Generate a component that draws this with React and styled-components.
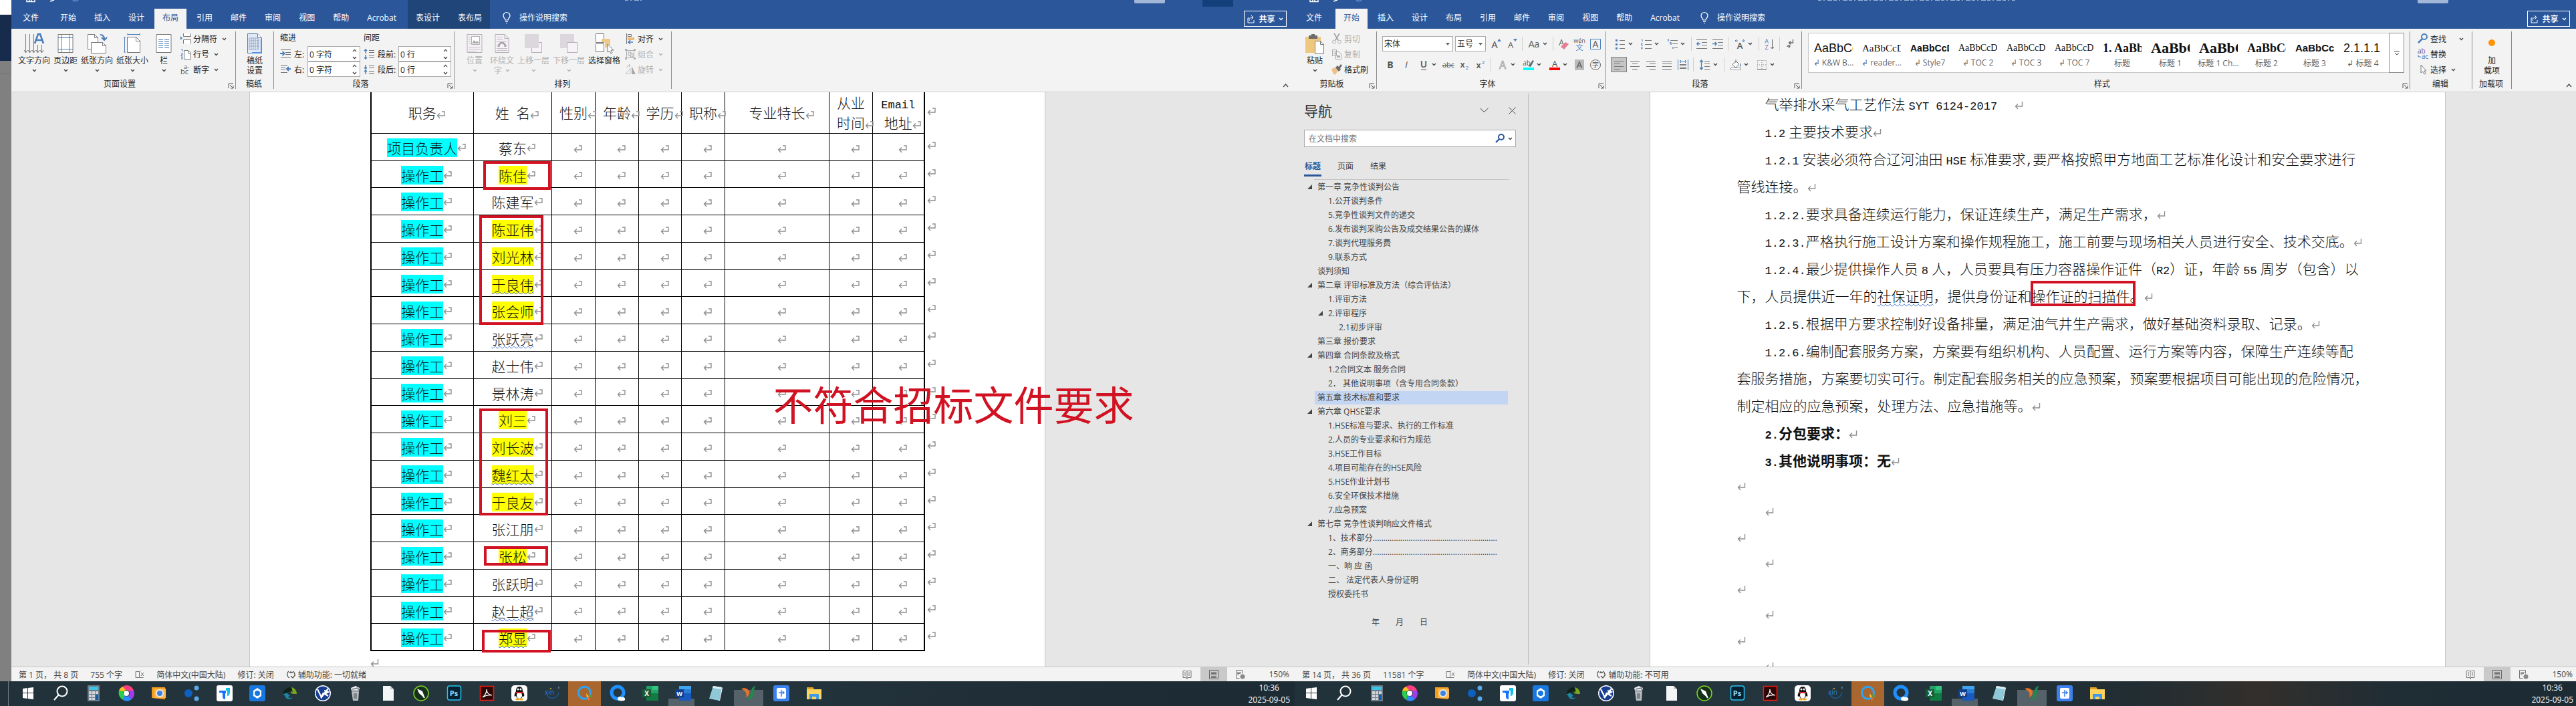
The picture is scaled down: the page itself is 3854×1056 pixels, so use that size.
import React from 'react'
import styled, { createGlobalStyle, css } from 'styled-components'

const UI = `"Open Sans", "Noto Sans", "Noto Sans CJK SC", sans-serif`
const SONG = `"Noto Sans CJK SC", sans-serif`
const MONO = `"Liberation Mono", "Noto Sans CJK SC", monospace`

/* ---------- data ---------- */

const tabs = ['开始', '插入', '设计', '布局', '引用', '邮件', '审阅', '视图', '帮助', 'Acrobat']

const people = [
  { name: '蔡东', job: '项目负责人' },
  { name: '陈佳', hot: true },
  { name: '陈建军' },
  { name: '陈亚伟', hot: true },
  { name: '刘光林', hot: true },
  { name: '于良伟', hot: true, wavy: true },
  { name: '张会师', hot: true },
  { name: '张跃亮', wavy: true },
  { name: '赵士伟' },
  { name: '景林涛' },
  { name: '刘三', hot: true },
  { name: '刘长波', hot: true },
  { name: '魏红太', hot: true, wavy: true },
  { name: '于良友', hot: true },
  { name: '张江朋' },
  { name: '张松', hot: true },
  { name: '张跃明' },
  { name: '赵士超', wavy: true },
  { name: '郑显', hot: true, wavy: true },
]

const dots = '.'.repeat(59)

const outline = [
  [1, '第一章 竞争性谈判公告', true],
  [2, '1.公开谈判条件'],
  [2, '5.竞争性谈判文件的递交'],
  [2, '6.发布谈判采购公告及成交结果公告的媒体'],
  [2, '7.谈判代理服务费'],
  [2, '9.联系方式'],
  [1, '谈判须知'],
  [1, '第二章 评审标准及方法（综合评估法）', true],
  [2, '1.评审方法'],
  [2, '2.评审程序', true],
  [3, '2.1初步评审'],
  [1, '第三章 报价要求'],
  [1, '第四章 合同条款及格式', true],
  [2, '1.2合同文本 服务合同'],
  [2, '2． 其他说明事项（含专用合同条款）'],
  [1, '第五章 技术标准和要求', false, true],
  [1, '第六章 QHSE要求', true],
  [2, '1.HSE标准与要求、执行的工作标准'],
  [2, '2.人员的专业要求和行为规范'],
  [2, '3.HSE工作目标'],
  [2, '4.项目可能存在的HSE风险'],
  [2, '5.HSE作业计划书'],
  [2, '6.安全环保技术措施'],
  [2, '7.应急预案'],
  [1, '第七章 竞争性谈判响应文件格式', true],
  [2, '1、技术部分' + dots],
  [2, '2、商务部分' + dots],
  [2, '一、响 应 函'],
  [2, '二、 法定代表人身份证明'],
  [2, '授权委托书'],
]

const gallery = [
  { text: 'AaBbCc', label: '↲ K&W B...', font: 'Liberation Sans', size: 18 },
  { text: 'AaBbCcDc', label: '↲ reader...', font: 'Liberation Serif', size: 15 },
  { text: 'AaBbCcDc', label: '↲ Style7', font: 'Liberation Sans', size: 14, bold: true },
  { text: 'AaBbCcDdE', label: '↲ TOC 2', font: 'Liberation Serif', size: 14 },
  { text: 'AaBbCcDdE', label: '↲ TOC 3', font: 'Liberation Serif', size: 14 },
  { text: 'AaBbCcDdE', label: '↲ TOC 7', font: 'Liberation Serif', size: 14 },
  { text: '1. AaBb', label: '标题', font: 'Liberation Serif', size: 18, bold: true },
  { text: 'AaBbC', label: '标题 1', font: 'Liberation Serif', size: 22, bold: true },
  { text: 'AaBbC', label: '标题 1 Ch...', font: 'Liberation Serif', size: 22, bold: true },
  { text: 'AaBbCc', label: '标题 2', font: 'Liberation Serif', size: 18, bold: true },
  { text: 'AaBbCcD', label: '标题 3', font: 'Liberation Sans', size: 15, bold: true },
  { text: '2.1.1.1', label: '↲ 标题 4', font: 'Liberation Sans', size: 18 },
]

/* ---------- icons ---------- */

const G = '#7a7a7a'
const B = '#4a7ebb'

const Svg = ({ w = 16, h = 16, children }) => (
  <Glyph width={w} height={h} viewBox={`0 0 ${w} ${h}`} fill="none" aria-hidden="true">{children}</Glyph>
)

const Glyph = styled.svg`
  display: block;
  flex: none;
  overflow: visible;
`

const Chev = ({ color = '#444' }) => (
  <Svg w={7} h={5}><path d="M1 1l2.500 2.500L6 1" stroke={color} strokeWidth="1.400" /></Svg>
)

const Launcher = () => (
  <Svg w={9} h={9}><path d="M1 8V1h7M3 3l5 5M8 4v4H4" stroke="#555" /></Svg>
)

const big = {
  direction: <Svg w={30} h={30}><path d="M2.500 1v27M8.500 1v27M14.500 1v27M20.500 17v11M26.500 17v11M0 25l2.500 4L5 25M6 25l2.500 4 2.500-4M12 25l2.500 4 2.500-4M18 25l2.500 4 2.500-4M24 25l2.500 4 2.500-4" stroke={G} /><path d="M16 15l5-14h3l5 14M18 10h9" stroke={B} strokeWidth="2.600" /></Svg>,
  margins: <Svg w={24} h={30}><path d="M1 1.500h22v27H1z" fill="#fff" stroke={G} /><path d="M5.500 2v26M18.500 2v26M1 6.500h22M1 23.500h22" stroke={B} /></Svg>,
  orient: <Svg w={30} h={30}><path d="M1.500 1.500h10l5 5v17h-15z" fill="#fff" stroke={G} /><path d="M6.500 13.500h17l5 5v11h-22z" fill="#fff" stroke={G} /><path d="M11.500 1.500v5h5M23.500 13.500v5h5" stroke={G} /><path d="M20 2c5 0 6 3 6 7m-4-3l4 4 4-4" stroke={B} strokeWidth="2.200" /></Svg>,
  size: <Svg w={26} h={30}><path d="M5.500 5.500h13l6 6v17h-19z" fill="#fff" stroke={G} /><path d="M18.500 5.500v6h6" stroke={G} /><path d="M6 1.500h18M6 0v3M24 0v3M1.500 6v22M0 6h3M0 28h3" stroke={B} /></Svg>,
  columns: <Svg w={24} h={30}><path d="M1 1.500h22v27H1z" fill="#fff" stroke={G} /><path d="M4 9.500h7M4 12.500h7M4 15.500h7M4 18.500h7M4 21.500h7M13 9.500h7M13 12.500h7M13 15.500h7M13 18.500h7M13 21.500h7" stroke={B} /></Svg>,
  manuscript: <Svg w={24} h={30}><path d="M1.500.5h15l6 6v23h-21z" fill="#dfe9f8" stroke="#5f7ba5" /><path d="M16.500.5v6h6" fill="#fff" stroke="#5f7ba5" /><path d="M4 7h13v17H4zM4 11h15M4 15h15M4 19h15M7 7v17M10 7v17M13 7v17M17 9v15" stroke="#9aa9be" /><path d="M22 8v21H8" stroke="#5b8fe0" strokeWidth="2" /></Svg>,
  position: <Svg w={24} h={30}><path d="M1 1.500h22v27H1z" fill="#f4f0f5" stroke="#b5b0b6" /><path d="M7.500 4.500h12v12h-12z" fill="#fff" stroke="#b5b0b6" /><path d="M8 15l3-5 3 3 2-2 3 4z" fill="#aaa" /><path d="M3 6.500h3M3 9.500h3M3 12.500h3M3 15.500h3M3 20.500h18M3 23.500h18M3 26.500h12" stroke="#c6c1c7" /></Svg>,
  wrap: <Svg w={22} h={30}><path d="M1 1.500h14l6 6v21H1z" fill="#f4f0f5" stroke="#b5b0b6" /><path d="M15 1.500v6h6" stroke="#b5b0b6" /><path d="M3 5.500h9M3 9.500h9M3 12.500h15M3 17.500h2M17 17.500h2M3 22.500h16M3 25.500h16" stroke="#c6c1c7" /><path d="M6 20c0-8 10-8 10 0" stroke="#a8a8a8" strokeWidth="3" /></Svg>,
  forward: <Svg w={26} h={30}><path d="M10.500 13.500h15v15h-15z" fill="#f6f2f7" stroke="#b5b0b6" /><path d="M0 1h21v21H0z" fill="#dcd7dc" /></Svg>,
  backward: <Svg w={26} h={30}><path d="M0 1h21v21H0z" fill="#dcd7dc" /><path d="M10.500 13.500h15v15h-15z" fill="#f6f2f7" stroke="#b5b0b6" /></Svg>,
  pane: <Svg w={28} h={30}><path d="M1.500.5h12v13h-12zM1.500 15.500h12v12h-12z" fill="#fff" stroke={G} /><path d="M10 8h13v9h-4v4h-4v-8h-5z" fill="#f0c987" /><path d="M19 16v12l3-2 2 4 2-1-2-4h4z" fill="#fff" stroke="#777" /></Svg>,
  paste: <Svg w={28} h={31}><path d="M0 5h23v24H0z" fill="#edc87e" /><path d="M5 3h4V1h5v2h4v5H5z" fill="#6c6c6c" /><path d="M14.500 11.500h8l5 5v14h-13z" fill="#fff" stroke={G} /><path d="M22.500 11.500v5h5" stroke={G} /></Svg>,
  addin: <Svg w={20} h={30}><circle cx="10" cy="14" r="5" fill="#ff9409" /></Svg>,
}

const small = {
  breaks: <Svg><path d="M4.500 0v4.500h11V0M4.500 15.500V9.500h11v6" stroke={G} fill="#fff" /><path d="M0 4l3 3-3 3z" fill={B} /></Svg>,
  lines: <Svg><path d="M5.500 2.500h6l4 4v9h-10z" fill="#fff" stroke={G} /><path d="M11.500 2.500v4h4" stroke={G} /><path d="M1 1h2v3M1 7h2v2H1v2h2M1 13h2v2H1" stroke={B} /></Svg>,
  hyphen: <Svg><text x="5" y="7" fontSize="9" fontFamily="Open Sans" fill="#555">a-</text><text x="0" y="15" fontSize="11" fontFamily="Open Sans" fill="#555">bc</text></Svg>,
  align: <Svg><path d="M2.500 0v16" stroke={G} /><path d="M4.500 1.500h5v3h-5z" stroke={G} /><path d="M4 6h10v4H4z" fill="#edb978" /><path d="M12 13H5m3-3l-3 3 3 3" stroke={B} strokeWidth="1.500" /></Svg>,
  group: <Svg><path d="M2.500 2.500h11v11h-11zM5 5h4v5H5zM8 7h4v5H8z" stroke="#b0b0b0" /><path d="M0 0h3v3H0zM13 0h3v3h-3zM0 13h3v3H0zM13 13h3v3h-3z" fill="#b0b0b0" /></Svg>,
  rotate: <Svg><path d="M1 14h7V6z" stroke="#c4c4c4" /><path d="M10 3v12h6z" fill="#a8a8a8" /><path d="M3 5c0-3 3-3 5-3M6 0l2 2-2 2" stroke="#b0b0b0" /></Svg>,
  cut: <Svg><path d="M4 0l6 10M12 0L6 10" stroke="#a0a0a0" strokeWidth="1.600" /><circle cx="4" cy="12.500" r="2.500" stroke="#b0b0b0" /><circle cx="12" cy="12.500" r="2.500" stroke="#b0b0b0" /></Svg>,
  copy: <Svg><path d="M1.500 1.500h6v9h-6zM6.500 4.500h5l3 3v8h-8z" fill="#f3f3f3" stroke="#ababab" /><path d="M8 9.500h5M8 11.500h5M8 13.500h5M3 4.500h3M3 6.500h3" stroke="#ababab" /></Svg>,
  painter: <Svg><path d="M0 7l6-2 4 5-5 6c-2-1-4-5-5-9z" fill="#edc087" /><path d="M6 5l3-3 2 2 3-4 2 2-3 4 1 2-3 3z" fill="#6a6a6a" /></Svg>,
  find: <Svg><circle cx="10" cy="5" r="4" stroke={B} strokeWidth="2" /><path d="M7 8l-6 6" stroke={B} strokeWidth="2.500" /></Svg>,
  replace: <Svg><text x="0" y="7" fontSize="10" fontFamily="Open Sans" fill="#555">a<tspan fill="#8a4fae">b</tspan></text><text x="6" y="15" fontSize="10" fontFamily="Open Sans" fill={B}>ac</text><path d="M1 9v3h4" stroke={B} /></Svg>,
  select: <Svg><path d="M5 1v12l3-2 2 4 2-1-2-4h3z" fill="#fff" stroke="#777" /></Svg>,
  indentL: <Svg w={17}><path d="M1 1.500h15M8 5.500h8M8 8.500h8M1 12.500h15" stroke="#777" /><path d="M0 7h6M3.500 4l3 3-3 3" stroke={B} strokeWidth="2" /></Svg>,
  indentR: <Svg w={17}><path d="M1 1.500h10M1 5.500h7M1 8.500h7M1 12.500h10" stroke="#777" /><path d="M16 7h-5M13 4l-3 3 3 3" stroke={B} strokeWidth="2" /></Svg>,
  before: <Svg w={17}><path d="M3 1v6M1 3l2-2 2 2M3 9v6M1 13l2 2 2-2" stroke={B} strokeWidth="1.500" /><path d="M8 2.500h8M8 5.500h8M8 10.500h8M8 13.500h8" stroke="#777" /></Svg>,
  after: <Svg w={17}><path d="M3 1v6M1 5l2 2 2-2M3 9v6M1 11l2-2 2 2" stroke={B} strokeWidth="1.500" /><path d="M8 2.500h8M8 5.500h8M8 10.500h8M8 13.500h8" stroke="#777" /></Svg>,
}

const Letter = ({ children, x = 8, y = 14, size = 15, color = '#555', weight, style, deco }) => (
  <text x={x} y={y} fontSize={size} fill={color} textAnchor="middle" fontWeight={weight} fontStyle={style} textDecoration={deco} fontFamily="Open Sans, Noto Sans CJK SC">{children}</text>
)

const tool = {
  grow: <Svg w={18}><Letter x={7}>A</Letter><path d="M11 4l3-4 3 4z" fill={B} /></Svg>,
  shrink: <Svg w={18}><Letter x={7} size={13}>A</Letter><path d="M11 0l3 4 3-4z" fill={B} /></Svg>,
  caseAa: <Svg w={18}><Letter x={9} y={13} size={14}>Aa</Letter></Svg>,
  clear: <Svg><Letter x={5} y={10} size={12}>A</Letter><path d="M4 12l7-7 5 3-7 8z" fill="#e57f93" /></Svg>,
  pinyin: <Svg w={18} h={20}><Letter x={9} y={8} size={9}>wén</Letter><Letter x={9} y={19} size={11} color={B}>文</Letter></Svg>,
  boxA: <Svg><path d="M.5.5h15v15H.5z" stroke={B} /><Letter y={13} size={14}>A</Letter></Svg>,
  bold: <Svg><Letter y={13} size={14} weight="700">B</Letter></Svg>,
  italic: <Svg><Letter y={13} size={14} style="italic">I</Letter></Svg>,
  underline: <Svg><Letter y={12} size={14} weight="600">U</Letter><path d="M4 15.500h8" stroke="#555" /></Svg>,
  strike: <Svg w={18}><Letter x={9} y={12} size={11}>abc</Letter><path d="M0 8.500h18" stroke="#555" /></Svg>,
  sub: <Svg><Letter x={5} y={12} size={13} weight="600">x</Letter><Letter x={12} y={15} size={8} color={B}>2</Letter></Svg>,
  sup: <Svg><Letter x={5} y={13} size={13} weight="600">x</Letter><Letter x={12} y={7} size={8} color={B}>2</Letter></Svg>,
  effect: <Svg><text x="8" y="14" fontSize="16" textAnchor="middle" fontFamily="Open Sans" fill="#fff" stroke="#b0b0b0">A</text></Svg>,
  marker: <Svg><Letter x={5} y={9} size={10}>ab</Letter><path d="M8 10l6-9 2 1-5 9z" fill="#666" /><path d="M0 12h16v4H0z" fill="#00ffff" /></Svg>,
  color: <Svg><Letter y={11} size={13}>A</Letter><path d="M0 12h16v4H0z" fill="#f00" /></Svg>,
  shade: <Svg><path d="M1 0h14v16H1z" fill="#bbb" /><Letter y={13} size={14}>A</Letter></Svg>,
  circle: <Svg><circle cx="8" cy="8" r="7.500" stroke="#666" /><Letter y={12} size={10}>字</Letter></Svg>,
  bullets: <Svg><path d="M1 1h3v3H1zM1 7h3v3H1zM1 13h3v3H1z" fill={B} /><path d="M7 2.500h8M7 8.500h8M7 14.500h8" stroke={G} /></Svg>,
  numbers: <Svg><path d="M1 1h1v3M0 7h2v1H1v2h2M0 13h2v2H0" stroke={B} /><path d="M6 2.500h10M6 8.500h10M6 14.500h10" stroke={G} /></Svg>,
  multi: <Svg><path d="M1 1h1v3M4 6h2v3M9 12v3" stroke={B} strokeWidth="1.300" /><path d="M5 2.500h11M8 7.500h8M11 13.500h5" stroke={G} /></Svg>,
  outdent: <Svg><path d="M0 1.500h16M8 5.500h8M8 9.500h8M0 14.500h16" stroke={G} /><path d="M6 7.500H1M3 5L1 7.500 3 10" stroke={B} strokeWidth="1.600" /></Svg>,
  indent: <Svg><path d="M0 1.500h16M8 5.500h8M8 9.500h8M0 14.500h16" stroke={G} /><path d="M0 7.500h5M4 5l2 2.500L4 10" stroke={B} strokeWidth="1.600" /></Svg>,
  asian: <Svg><Letter y={15} size={13} weight="600">A</Letter><path d="M5 3H1m2-2L1 3l2 2M11 3h4m-2-2l2 2-2 2" stroke={B} /></Svg>,
  sort: <Svg><Letter x={4} y={7} size={9} color={B}>A</Letter><Letter x={4} y={16} size={9} color="#8a4fae">Z</Letter><path d="M12.500 1v14M10 12l2.500 3 2.500-3" stroke="#666" /></Svg>,
  marks: <Svg><path d="M12.500 1v5H7M9 3.500L6.500 6 9 8.500M3 11h5M6 9l2 2-2 3" stroke="#666" strokeWidth="1.300" /></Svg>,
  left: <Svg w={14} h={14}><path d="M0 1.500h14M0 5.500h9M0 9.500h14M0 13.500h9" stroke={G} /></Svg>,
  center: <Svg w={14} h={14}><path d="M0 1.500h14M3 5.500h8M0 9.500h14M3 13.500h8" stroke={G} /></Svg>,
  right: <Svg w={14} h={14}><path d="M0 1.500h14M5 5.500h9M0 9.500h14M5 13.500h9" stroke={G} /></Svg>,
  justify: <Svg w={14} h={14}><path d="M0 1.500h14M0 5.500h14M0 9.500h14M0 13.500h14" stroke={G} /></Svg>,
  distribute: <Svg><path d="M.5 0v16M15.500 0v16M3 3h10M5 1L3 3l2 2M11 1l2 2-2 2" stroke={B} /><path d="M3 7.500h10M3 9.500h10M3 11.500h10M3 13.500h10" stroke={G} /></Svg>,
  spacing: <Svg><path d="M2.500 1v14M0 4l2.500-3L5 4M0 12l2.500 3L5 12" stroke={B} strokeWidth="1.300" /><path d="M7 2.500h8M7 6.500h8M7 10.500h8M7 14.500h8" stroke={G} /></Svg>,
  fill: <Svg><path d="M3 8l5-6 5 5-5 5z" fill="#fff" stroke="#777" /><path d="M8 0v5" stroke="#777" /><path d="M14 5c2 3 2 5 0 6z" fill={B} /><path d="M.5 12.500h15v3H.5z" fill="#fff" stroke="#999" /></Svg>,
  border: <Svg><path d="M1.500 1.500h13v13h-13zM8 1v14M1 8h14" stroke="#888" strokeDasharray="1 2" /><path d="M1 14.500h14" stroke="#666" /></Svg>,
}

const Sq = ({ fill, r = 3, children }) => (
  <Svg w={24} h={24}><rect width="24" height="24" rx={r} fill={fill} />{children}</Svg>
)
const AppText = ({ children, x = 12, y = 17, size = 12, color = '#fff' }) => (
  <text x={x} y={y} fontSize={size} fill={color} fontWeight="700" textAnchor="middle" fontFamily="Open Sans">{children}</text>
)

const apps = [
  ['开始', <Svg w={24} h={24}><path d="M4 5l7-1v7H4zM12 4l8-1v8h-8zM4 12h7v8l-7-1zM12 12h8v9l-8-1z" fill="#fff" /></Svg>],
  ['搜索', <Svg w={24} h={24}><circle cx="14" cy="9" r="7.500" stroke="#fff" strokeWidth="2" /><path d="M9 14l-7 8" stroke="#fff" strokeWidth="2" /></Svg>],
  ['计算器', <Svg w={24} h={24}><rect x="3" width="18" height="24" rx="1" fill="#6f7a85" /><path d="M5 2h14v5H5z" fill="#3cc5e8" /><path d="M5 9h4v4H5zM10 9h4v4h-4zM15 9h4v4h-4zM5 14h4v4H5zM10 14h4v4h-4zM5 19h4v3H5zM10 19h4v3h-4z" fill="#cfd6dc" /><path d="M15 14h4v8h-4z" fill="#0f5fae" /></Svg>],
  ['浏览器', <Svg w={24} h={24}><path d="M12 0a12 12 0 0 1 11 8l-8 0a5 5 0 0 0-7 1L5 3a12 12 0 0 1 7-3z" fill="#ff3e7f" /><path d="M23 8a12 12 0 0 1-3 13l-5-5a5 5 0 0 0 0-8z" fill="#a03cf0" /><path d="M20 21a12 12 0 0 1-13 1l2-7a5 5 0 0 0 6 1z" fill="#2f8bff" /><path d="M7 22A12 12 0 0 1 1 8l7 1a5 5 0 0 0 1 6z" fill="#2ccf4c" /><path d="M1 8a12 12 0 0 1 5-6l5 5-3 2z" fill="#ffc21a" /><circle cx="12" cy="12" r="4" fill="#fff" /></Svg>],
  ['图片查看', <Svg w={24} h={24}><path d="M1 3h20v18L1 19z" fill="#f79b1b" /><path d="M5 5h17v14H5z" fill="#ffb84a" /><circle cx="13" cy="12" r="5" fill="#3f82d8" stroke="#dfe9f5" strokeWidth="2" /></Svg>],
  ['共享', <Svg w={24} h={24}><circle cx="7" cy="12" r="6" fill="#0d5fc0" /><circle cx="19" cy="4" r="3.500" fill="#5aa8e8" /><circle cx="19" cy="20" r="3.500" fill="#5aa8e8" /></Svg>],
  ['待办', <Sq fill="#fff"><path d="M4 8h10v4H8v-1H4zM9 12h4v9c-3 0-4-2-4-4z" fill="#1573ff" /><path d="M14 4h6v6c0 4-2 6-4 6V8h-2z" fill="#12bfe8" /></Sq>],
  ['云盘', <Sq fill="#1878e0"><path d="M12 4l6 4v8l-6 4-6-4V8z" fill="#fff" /><circle cx="12" cy="12" r="4" fill="#1878e0" /></Sq>],
  ['同步', <Svg w={24} h={24}><path d="M2 13a10 9 0 0 1 14-9l-2 5a5 5 0 0 0-6 4z" fill="#102218" /><path d="M14 3c5 1 8 5 8 10h-4l-5-1 1-3 2 1z" fill="#7aa51e" /><path d="M1 14l6-3 5 5-3 1c1 2 4 3 7 1-3 4-11 4-12-3z" fill="#1b87a5" /></Svg>],
  ['CAD', <Svg w={24} h={24}><circle cx="12" cy="12" r="12" fill="#fff" /><circle cx="12" cy="12" r="10.500" fill="#173e91" /><path d="M4 6l6 12 3-7M20 5L9 19M14 8l6 2-5 3 5 3" stroke="#fff" strokeWidth="2.200" /></Svg>],
  ['回收站', <Svg w={24} h={24}><path d="M6 9h11l-1 14H8z" fill="#b9bec2" /><path d="M5 4l7-3 6 3-1 4H6z" fill="#eef1f3" /><path d="M7 6l8-2 2 3" stroke="#6d7478" strokeWidth="1.500" /><path d="M9 12h5v8H9z" fill="#7d858a" /></Svg>],
  ['文档', <Svg w={24} h={24}><path d="M4 1h11l5 5v17H4z" fill="#f3f5f6" /><path d="M15 1v5h5" fill="#c3cacf" /></Svg>],
  ['CorelDRAW', <Svg w={24} h={24}><circle cx="12" cy="12" r="11" fill="#16301a" stroke="#7ed321" strokeWidth="1.500" /><path d="M6 5l8 4 3 8-1 1-7-6z" fill="#fff" /><path d="M15 16l2 3" stroke="#fff" strokeWidth="2" /></Svg>],
  ['Photoshop', <Svg w={24} h={24}><rect x="2.500" y="1" width="20" height="21" rx="3" fill="#06202f" stroke="#27c3f3" strokeWidth="1.500" /><AppText x={12} y={16} size={11} color="#8fdcff">Ps</AppText></Svg>],
  ['Acrobat', <Svg w={24} h={24}><rect x="2.500" y="1.500" width="20" height="21" fill="#2b0707" stroke="#f01c10" strokeWidth="1.500" /><path d="M6 18c4-3 6-8 6-12 0 5 3 8 8 9-5-1-9 0-14 3z" stroke="#fff" strokeWidth="1.200" /></Svg>],
  ['QQ', <Sq fill="#fff" r={5}><path d="M12 2c4 0 5 3 5 7 2 3 3 6 2 8l-2-1c-1 3-2 4-5 4s-4-1-5-4l-2 1c-1-2 0-5 2-8 0-4 1-7 5-7z" fill="#111" /><ellipse cx="12" cy="15" rx="4" ry="5" fill="#fff" /><path d="M7 10h10v2H7z" fill="#e61f1f" /><ellipse cx="9" cy="21" rx="3" ry="1.500" fill="#f7a81b" /><ellipse cx="15" cy="21" rx="3" ry="1.500" fill="#f7a81b" /><circle cx="10" cy="6" r="1.500" fill="#fff" /><circle cx="14" cy="6" r="1.500" fill="#fff" /></Sq>],
  ['XIN', <Svg w={24} h={24}><path d="M4 12c0 9 15 11 18-1" stroke="#1b5b9a" strokeWidth="1.500" /><text x="1" y="14" fontSize="10" fontFamily="Open Sans" fill="#2f7fca">xin</text><circle cx="10" cy="5" r="1" fill="#f2b52c" /><path d="M22 2v3" stroke="#7fb9ec" /></Svg>],
  ['搜索工具', <Svg w={24} h={24}><path d="M16 19a9 9 0 1 1 4-5" stroke="#2ea3f2" strokeWidth="3" /><path d="M14 12l4 5-3 1z" fill="#ffc82e" /><path d="M18 14l5 2-4 3z" fill="#37b34a" /><path d="M15 18l3 5 1-4z" fill="#ff7a2e" /></Svg>, 'hot'],
  ['QQ浏览器', <Svg w={24} h={24}><circle cx="12" cy="11" r="9" stroke="#1e90ff" strokeWidth="5" /><path d="M12 21c0-4 4-5 6-3 3-1 6 1 5 4-1 2-11 2-11-1z" fill="#fff" /></Svg>],
  ['Excel', <Svg w={24} h={24}><rect x="6" y="1" width="18" height="22" rx="1" fill="#21a366" /><path d="M15 1h9v6h-9z" fill="#33c481" /><path d="M6 12h18v11H6z" fill="#107c41" /><rect y="6" width="13" height="12" fill="#185c37" /><AppText x={6.5} y={16} size={10}>X</AppText></Svg>],
  ['Word', <Svg w={24} h={24}><rect x="6" y="1" width="18" height="22" rx="1" fill="#2b7cd3" /><path d="M6 1h18v5H6z" fill="#41a5ee" /><path d="M6 12h18v11H6z" fill="#185abd" /><rect y="6" width="13" height="12" fill="#103f91" /><AppText x={6.5} y={16} size={9}>W</AppText></Svg>, 'open'],
  ['记事本', <Svg w={24} h={24}><path d="M8 1l13 2-4 20-15-3z" fill="#8fc9d8" /><path d="M8 1l13 2-1 3L7 4z" fill="#d9eef3" /><path d="M21 3l1 1-4 19h-1z" fill="#fff" /></Svg>],
  ['助手', <Svg w={24} h={24}><path d="M1 5c5-2 12 0 12 6 0 4-3 5-4 8-1-3 0-5-1-8-1-2-4-4-7-6z" fill="#e8742a" /><path d="M23 1c-3 2-3 8-4 13-1 6-6 9-10 7 4-1 5-4 6-9 1-6 3-11 8-11z" fill="#1f8a4a" /></Svg>, 'busy'],
  ['快捷', <Sq fill="#3c82ee"><rect x="5" y="4" width="14" height="16" rx="2" fill="#fff" /><path d="M12 7v10M8 11h8M14 9l2 2-2 2" stroke="#3c82ee" strokeWidth="1.600" /></Sq>],
  ['文件资源管理器', <Svg w={24} h={24}><path d="M1 3h9l2 3h11v15H1z" fill="#ffd45e" /><path d="M1 3h9l2 3H1z" fill="#e3a320" /><path d="M5 21v-8h14v8h-4v-4H9v4z" fill="#3d9ae8" /></Svg>],
]

/* ---------- shell ---------- */

const Global = createGlobalStyle`
  * { box-sizing: border-box; }
  body {
    margin: 0;
    overflow: hidden;
    background: #808080;
    font-family: ${UI};
    font-size: 12px;
    color: #262626;
  }
  button, input, select {
    font: inherit;
    color: inherit;
    margin: 0;
    padding: 0;
    border: 0;
    background: none;
  }
  h1, h2, p, ul { margin: 0; padding: 0; font: inherit; }
`

const Desktop = styled.div`
  display: grid;
  grid-template-columns: 17px 1fr 1fr;
  height: 100vh;
  margin-right: -3px;
`

const Sliver = styled.div`
  display: grid;
  grid-template-rows: 22px 69px 20px 1fr 37px;
  background: #808080;
  & > :nth-child(1) { background: #fff; }
  & > :nth-child(2) { background: #172b4d; }
  & > :nth-child(3) { border-bottom: 1px solid #707070; }
  & > :nth-child(5) {
    background: linear-gradient(90deg, #22313a 12px, #6d7a82 12px, #6d7a82 13px, #22313a 13px);
  }
`

const Screen = styled.section`
  display: flex;
  flex-direction: column;
  min-width: 0;
  height: 100vh;
  overflow: hidden;
`

const TitleStrip = styled.div`
  display: flex;
  flex: none;
  height: 13px;
  overflow: hidden;
  background: #2b579a;
`
const Quick = styled.div`
  width: 180px;
  padding-left: 22px;
`
const TitleBits = styled.div`
  display: flex;
  flex: 1;
  justify-content: center;
`
const Login = styled.button`
  width: 46px;
  height: 5px;
  margin-right: 56px;
  border-radius: 0 0 2px 2px;
  background: #a3b7d6;
`
const Patch = styled.div`
  width: 46px;
  height: 10px;
  margin-right: 92px;
  background: ${p => (p.$on ? '#13407a' : 'transparent')};
`

const TabBar = styled.nav`
  display: flex;
  flex: none;
  gap: 3px;
  height: 30px;
  padding: 0 12px 0 5px;
  background: #2b579a;
  color: #fff;
`
const Tab = styled.button`
  padding: 0 12px 4px;
  margin-right: ${p => (p.$file ? 5 : 0)}px;
  white-space: nowrap;
  ${p => p.$active && css`
    background: #f3f3f3;
    color: #2b579a;
  `}
`
const ContextTabs = styled.div`
  display: flex;
  gap: 3px;
  height: 43px;
  margin: -13px 0 0 2px;
  padding-top: 13px;
  background: #204579;
`
const Tell = styled.button`
  display: flex;
  align-items: center;
  gap: 13px;
  padding: 0 0 4px 16px;
`
const Share = styled.button`
  display: flex;
  align-items: center;
  justify-content: center;
  gap: 5px;
  width: 64px;
  height: 24px;
  margin: 3px 0 0 auto;
  border: 1px solid #fff;
  font-weight: 600;
`

const Ribbon = styled.div`
  display: flex;
  flex: none;
  height: 95px;
  padding: 4px 0;
  border-bottom: 1px solid #d0d0d0;
  background: #f3f3f3;
`
const Group = styled.section`
  display: flex;
  flex-direction: column;
  flex: none;
  width: ${p => p.$w}px;
  padding-left: ${p => p.$pad || 0}px;
  border-right: 1px solid #8c8c8c;
`
const GroupBody = styled.div`
  display: flex;
  flex: 1;
  gap: 5px;
  justify-content: ${p => (p.$center ? 'center' : 'flex-start')};
`
const GroupFoot = styled.div`
  display: flex;
  align-items: flex-end;
  height: 15px;
  padding-right: 2px;
  margin-left: -${p => p.$pad || 0}px;
  line-height: 15px;
  span { flex: 1; text-align: center; }
`
const Fold = styled.button`
  align-self: flex-end;
  margin-left: auto;
  padding: 0 9px 2px 0;
`

const BigBtn = styled.button`
  display: flex;
  flex-direction: column;
  align-items: center;
  min-width: 36px;
  height: 68px;
  padding-top: 3px;
  line-height: 15px;
  white-space: pre;
  color: ${p => (p.$off ? '#b1b1b1' : '#262626')};
`
const BigIcon = styled.span`
  height: 33px;
`
const Under = styled.span`
  display: flex;
  align-items: center;
  gap: 5px;
  height: 15px;
`
const SmallCol = styled.div`
  display: flex;
  flex-direction: column;
  gap: 1px;
  margin-left: 2px;
`
const SmallBtn = styled.button`
  display: flex;
  align-items: center;
  gap: ${p => (p.$wide ? 19 : 7)}px;
  height: 22px;
  white-space: nowrap;
  color: ${p => (p.$off ? '#b1b1b1' : '#262626')};
  span { display: flex; align-items: center; gap: 3px; }
`

const SpinCol = styled.div`
  padding-left: ${p => (p.$first ? 9 : 0)}px;
  h2 { height: 22px; line-height: 20px; }
`
const SpinRow = styled.label`
  display: flex;
  align-items: center;
  gap: 4px;
  height: 23px;
  span { width: ${p => p.$text}px; white-space: nowrap; }
`
const SpinBox = styled.div`
  display: flex;
  align-items: center;
  width: 79px;
  height: 23px;
  padding: 0 4px 0 2px;
  border: 1px solid #ababab;
  background: #fff;
  input { flex: 1; min-width: 0; outline: 0; }
`
const Steps = styled.span`
  display: flex;
  flex-direction: column;
  gap: 6px;
  && { width: 7px; }
`

const ToolRows = styled.div`
  display: flex;
  flex-direction: column;
  gap: 8px;
  padding-top: 7px;
`
const ToolRow = styled.div`
  display: flex;
  align-items: center;
  height: 23px;
`
const Tool = styled.button`
  display: flex;
  align-items: center;
  justify-content: center;
  gap: 4px;
  width: ${p => (p.$drop ? 39 : 24)}px;
  height: 23px;
  ${p => p.$on && css`
    background: #c5c5c5;
    border: 1px solid #808080;
  `}
`
const Rule = styled.i`
  width: 1px;
  height: 21px;
  margin: 0 3px;
  background: #d0d0d0;
`
const Combo = styled.div`
  display: flex;
  align-items: center;
  width: ${p => p.$w}px;
  height: 23px;
  margin-right: 3px;
  padding: 0 4px 0 2px;
  border: 1px solid #ababab;
  background: #fff;
  select { flex: 1; min-width: 0; appearance: none; outline: 0; }
`

const Gallery = styled.div`
  display: flex;
  width: 892px;
  height: 60px;
  margin-top: 2px;
  border: 1px solid #c6c6c6;
  background: #fff;
`
const StyleCard = styled.button`
  display: flex;
  flex-direction: column;
  align-items: center;
  width: 72px;
  padding: 9px 6px 0 8px;
  color: #666;
  white-space: nowrap;
`
const Preview = styled.span`
  width: 58px;
  height: 26px;
  overflow: hidden;
  line-height: 26px;
  text-align: left;
  color: #111;
  font-family: ${p => p.$font};
  font-size: ${p => p.$size}px;
  font-weight: ${p => (p.$bold ? 700 : 400)};
`
const More = styled.button`
  display: flex;
  align-items: center;
  justify-content: center;
  width: 23px;
  margin: -1px -1px -1px auto;
  border: 1px solid #8c8c8c;
`

const StatusBar = styled.footer`
  display: flex;
  flex: none;
  align-items: center;
  gap: 18px;
  height: 22px;
  padding: 0 8px 0 11px;
  border-top: 1px solid #c6c6c6;
  background: #f3f3f3;
  white-space: nowrap;
  color: #444;
`
const Count = styled.span`
  min-width: ${p => p.$w}px;
`
const Access = styled.span`
  display: flex;
  gap: 3px;
  align-items: center;
`
const Views = styled.div`
  display: flex;
  align-items: center;
  height: 21px;
  margin: 0 4px 0 auto;
`
const ViewBtn = styled.button`
  display: flex;
  align-items: center;
  justify-content: center;
  width: 40px;
  height: 21px;
  background: ${p => (p.$on ? '#c9c9c9' : 'none')};
`

const Taskbar = styled.div`
  display: flex;
  flex: none;
  height: 37px;
  background: ${p => p.$bg};
`
const AppBtn = styled.button`
  display: flex;
  align-items: center;
  justify-content: center;
  width: 49px;
  padding-bottom: 1px;
  ${p => p.$state === 'hot' && 'background: #a9672f;'}
  ${p => p.$state === 'open' && 'background: linear-gradient(#0000 26px, #55626a 26px) 3px 0 / 39px 100% no-repeat;'}
  ${p => p.$state === 'busy' && 'background: linear-gradient(#0000 13px, #55626a 13px) 3px 0 / 44px 100% no-repeat;'}
`
const Clock = styled.time`
  display: flex;
  flex-direction: column;
  align-items: center;
  margin-left: auto;
  padding: 1px 7px 0 0;
  line-height: 18px;
  color: #fff;
`

/* ---------- documents ---------- */

const Work = styled.main`
  display: flex;
  flex: 1;
  min-height: 0;
  overflow: hidden;
  background: #e6e6e6;
`
const Canvas = styled.div`
  display: flex;
  flex: 1;
  justify-content: center;
  min-width: 0;
  padding-right: 18px;
`
const Page = styled.article`
  position: relative;
  width: 1191px;
  padding-left: ${p => p.$pad}px;
  border: 1px solid #c6c6c6;
  border-width: 0 1px;
  background: #fff;
  font-family: ${SONG};
  font-size: 21px;
  font-weight: 300;
  color: #111;
`

const MarkSvg = styled.svg`
  width: 13px;
  height: 12px;
  margin-right: -13px;
  vertical-align: middle;
`
const CellMark = () => (
  <MarkSvg viewBox="0 0 13 12" fill="none"><path d="M8 1h4v6H2M5 3.500L1.500 7 5 11" stroke="#909090" strokeWidth="1.400" /></MarkSvg>
)
const ParaMark = () => (
  <MarkSvg viewBox="0 0 13 12" fill="none"><path d="M11.500 0v7H2M5 3.500L1.500 7 5 11" stroke="#909090" strokeWidth="1.400" /></MarkSvg>
)

const Roster = styled.table`
  width: 842px;
  table-layout: fixed;
  border-collapse: collapse;
  text-align: center;
  line-height: 28px;
  white-space: nowrap;
  thead tr { height: 61px; }
  tbody tr { height: 41px; }
  tbody tr:nth-child(4n + 2) { height: 40px; }
  th, td {
    padding: 0;
    border: 1px solid #000;
    font-weight: 300;
  }
  thead th { border-top: 0; }
  th:first-child { border-left: 2px solid #000; }
  tr > :nth-child(9) { border-right: 2px solid #000; }
  tbody tr:last-child > * { border-bottom: 2px solid #000; }
  tr > td:nth-child(10) {
    border: 0;
    padding: 0 0 8px 3px;
    line-height: 1;
    vertical-align: middle;
    text-align: left;
  }
`
const HeadLine = styled.span`
  display: block;
  height: 30px;
  line-height: 30px;
`
const Hl = styled.span`
  display: inline-block;
  height: 28px;
  vertical-align: middle;
  background: ${p => p.$c || 'none'};
  ${p => p.$wavy && css`
    text-decoration: underline wavy #3b6fd8 1px;
    text-underline-offset: 2px;
  `}
`

const RedBox = styled.div`
  position: absolute;
  left: ${p => p.$x}px;
  top: ${p => p.$y}px;
  width: ${p => p.$w}px;
  height: ${p => p.$h}px;
  border: 4px solid #d01222;
`
const RedNote = styled.div`
  position: absolute;
  left: 783px;
  top: 429px;
  font-size: 60px;
  font-weight: 400;
  line-height: 72px;
  white-space: nowrap;
  color: #d01222;
`

const Line = styled.p`
  height: 41px;
  line-height: 41px;
  padding-left: ${p => (p.$in ? 42 : 0)}px;
  white-space: pre;
  font-weight: ${p => (p.$bold ? 700 : 300)};
`
const Blank = styled.p`
  display: flex;
  align-items: center;
  height: ${p => (p.$in ? 40 : 37)}px;
  padding-left: ${p => (p.$in ? 42 : 0)}px;
`
const Body = styled.div`
  margin-top: -3px;
`
const L = styled.span`
  font-family: ${MONO};
  font-size: 17px;
  font-weight: ${p => (p.$bold ? 700 : 400)};
  line-height: 1;
  padding: ${p => (p.$both ? '0 5px' : p.$after ? '0 5px 0 0' : 0)};
`
const Wavy = styled.span`
  text-decoration: underline wavy #3b6fd8 1px;
  text-underline-offset: 3px;
`

/* ---------- navigation pane ---------- */

const NavPane = styled.aside`
  display: flex;
  flex-direction: column;
  flex: none;
  width: 350px;
  margin: 2px 0 3px;
  padding: 10px 18px 0 14px;
  border-right: 1px solid #bdbdbd;
  color: #444;
`
const NavHead = styled.div`
  display: flex;
  align-items: center;
  gap: 30px;
  height: 30px;
  h1 { flex: 1; font-size: 21px; color: #333; }
`
const NavSearch = styled.label`
  display: flex;
  align-items: center;
  gap: 5px;
  height: 26px;
  margin-top: 14px;
  padding: 0 4px 0 6px;
  border: 1px solid #ababab;
  background: #fff;
  input { flex: 1; outline: 0; }
  input::placeholder { color: #767676; opacity: 1; }
`
const NavTabs = styled.div`
  display: flex;
  gap: 23px;
  height: 49px;
  padding-top: 15px;
`
const NavTab = styled.button`
  height: 29px;
  padding: 0 1px;
  border-bottom: 3px solid ${p => (p.$on ? '#2b579a' : 'transparent')};
  color: ${p => (p.$on ? '#2b579a' : '#444')};
  font-weight: ${p => (p.$on ? 700 : 400)};
`
const Tree = styled.ul`
  margin: 0 12px 0 5px;
  list-style: none;
`
const Node = styled.li`
  display: flex;
  align-items: center;
  height: 21px;
  padding-left: ${p => (p.$level - 1) * 16}px;
  white-space: pre;
  span {
    flex: 1;
    height: 20px;
    line-height: 19px;
    padding-left: 4px;
    background: ${p => (p.$on ? '#c2d5f2' : 'none')};
  }
`
const TreeTop = styled.div`
  height: 1px;
  margin: -1px 10px 0 15px;
  background: #c6c6c6;
`
const Fork = styled.i`
  width: 11px;
`
const DateLine = styled.div`
  display: flex;
  gap: 24px;
  margin: 21px 0 0 101px;
  line-height: 21px;
`

/* ---------- pieces ---------- */

function Big({ icon, label, off, drop = true, tail }) {
  return (
    <BigBtn $off={off}>
      <BigIcon>{big[icon]}</BigIcon>
      {label}
      <Under>{tail}{drop && <Chev color={off ? '#b1b1b1' : '#444'} />}</Under>
    </BigBtn>
  )
}

function Small({ icon, label, off, drop, wide }) {
  return (
    <SmallBtn $off={off} $wide={wide}>
      <span>{small[icon]}{label}</span>
      {drop && <Chev color={off ? '#b1b1b1' : '#444'} />}
    </SmallBtn>
  )
}

function RibbonGroup({ title, w, pad, center, launch, children }) {
  return (
    <Group $w={w} $pad={pad}>
      <GroupBody $center={center}>{children}</GroupBody>
      <GroupFoot $pad={pad}><span>{title}</span>{launch && <Launcher />}</GroupFoot>
    </Group>
  )
}

function Spin({ icon, label, value, text }) {
  return (
    <SpinRow $text={text}>
      {small[icon]}
      <span>{label}</span>
      <SpinBox>
        <input defaultValue={value} />
        <Steps>
          <Svg w={7} h={5}><path d="M1 4l2.500-2.500L6 4" stroke="#555" strokeWidth="1.300" /></Svg>
          <Chev />
        </Steps>
      </SpinBox>
    </SpinRow>
  )
}

function Tools({ items }) {
  return items.map((t, i) => {
    if (t === '|') return <Rule key={i} />
    const [name, flag] = t.split(':')
    return (
      <Tool key={i} $drop={flag === 'v'} $on={flag === 'on'} aria-label={name}>
        {tool[name]}
        {flag === 'v' && <Chev />}
      </Tool>
    )
  })
}

function Drop({ label, value, w }) {
  return (
    <Combo $w={w}>
      <select aria-label={label} defaultValue={value}><option>{value}</option></select>
      <Svg w={6} h={4}><path d="M0 0h6L3 4z" fill="#666" /></Svg>
    </Combo>
  )
}

function Header({ active, context, patch, titleWidth }) {
  return (
    <>
      <TitleStrip>
        <Quick>
          <Svg w={90} h={4}><path d="M1 0v2.500h12V0M5 0v2M8 0v2" stroke="#fff" strokeWidth="1.500" /><path d="M36 2l6-2" stroke="#fff" strokeWidth="1.500" /><path d="M70 0c1 2 6 2 8 0" stroke="#5b86c4" strokeWidth="2" /></Svg>
        </Quick>
        <TitleBits>
          <Svg w={titleWidth} h={2}><path d={`M0 .5h${titleWidth}`} stroke="#9fb4d6" strokeDasharray="5 3 2 4 7 2" /></Svg>
        </TitleBits>
        <Login aria-label="登录" />
        <Patch $on={patch} />
      </TitleStrip>
      <TabBar>
        <Tab $file>文件</Tab>
        {tabs.map(t => <Tab key={t} $active={t === active}>{t}</Tab>)}
        {context && (
          <ContextTabs>
            <Tab>表设计</Tab>
            <Tab>表布局</Tab>
          </ContextTabs>
        )}
        <Tell>
          <Svg w={12} h={17}><path d="M4 12C4 9 1 9 1 5.500a5 5 0 0 1 10 0C11 9 8 9 8 12zM4 14.500h4M5 16.500h2" stroke="#fff" strokeWidth="1.200" /></Svg>
          操作说明搜索
        </Tell>
        <Share>
          <Svg w={12} h={13}><path d="M3 5H1v7h9V8M3 9c0-4 2-5 5-5M6 1l3 3-3 3" stroke="#fff" /></Svg>
          共享
          <Chev color="#fff" />
        </Share>
      </TabBar>
    </>
  )
}

const FoldUp = () => (
  <Fold aria-label="折叠功能区"><Svg w={9} h={6}><path d="M1 5l3.500-4L8 5" stroke="#444" strokeWidth="1.300" /></Svg></Fold>
)

function LayoutRibbon() {
  return (
    <Ribbon>
      <RibbonGroup title="页面设置" w={336} pad={10} launch>
        <Big icon="direction" label="文字方向" />
        <Big icon="margins" label="页边距" />
        <Big icon="orient" label="纸张方向" />
        <Big icon="size" label="纸张大小" />
        <Big icon="columns" label="栏" />
        <SmallCol>
          <Small icon="breaks" label="分隔符" drop />
          <Small icon="lines" label="行号" drop />
          <Small icon="hyphen" label="断字" drop />
        </SmallCol>
      </RibbonGroup>
      <RibbonGroup title="稿纸" w={57} center>
        <Big icon="manuscript" label="稿纸" tail="设置" drop={false} />
      </RibbonGroup>
      <RibbonGroup title="段落" w={271} launch>
        <SpinCol $first>
          <h2>缩进</h2>
          <Spin icon="indentL" label="左:" value="0 字符" text={16} />
          <Spin icon="indentR" label="右:" value="0 字符" text={16} />
        </SpinCol>
        <SpinCol>
          <h2>间距</h2>
          <Spin icon="before" label="段前:" value="0 行" text={27} />
          <Spin icon="after" label="段后:" value="0 行" text={27} />
        </SpinCol>
      </RibbonGroup>
      <RibbonGroup title="排列" w={324} pad={11}>
        <Big icon="position" label="位置" off />
        <Big icon="wrap" label="环绕文" tail="字" off />
        <Big icon="forward" label="上移一层" off />
        <Big icon="backward" label="下移一层" off />
        <Big icon="pane" label="选择窗格" drop={false} />
        <SmallCol>
          <Small icon="align" label="对齐" drop />
          <Small icon="group" label="组合" off drop />
          <Small icon="rotate" label="旋转" off drop />
        </SmallCol>
      </RibbonGroup>
      <FoldUp />
    </Ribbon>
  )
}

function HomeRibbon() {
  return (
    <Ribbon>
      <RibbonGroup title="剪贴板" w={123} pad={12} launch>
        <Big icon="paste" label="粘贴" />
        <SmallCol>
          <Small icon="cut" label="剪切" off />
          <Small icon="copy" label="复制" off />
          <Small icon="painter" label="格式刷" />
        </SmallCol>
      </RibbonGroup>
      <RibbonGroup title="字体" w={343} pad={8} launch>
        <ToolRows>
          <ToolRow>
            <Drop label="字体" value="宋体" w={106} />
            <Drop label="字号" value="五号" w={46} />
            <Tools items={['grow', 'shrink', '|', 'caseAa:v', '|', 'clear', 'pinyin', 'boxA']} />
          </ToolRow>
          <ToolRow>
            <Tools items={['bold', 'italic', 'underline:v', 'strike', 'sub', 'sup', '|', 'effect:v', 'marker:v', 'color:v', 'shade', 'circle']} />
          </ToolRow>
        </ToolRows>
      </RibbonGroup>
      <RibbonGroup title="段落" w={293} pad={7} launch>
        <ToolRows>
          <ToolRow>
            <Tools items={['bullets:v', 'numbers:v', 'multi:v', '|', 'outdent', 'indent', '|', 'asian:v', '|', 'sort', '|', 'marks']} />
          </ToolRow>
          <ToolRow>
            <Tools items={['left:on', 'center', 'right', 'justify', 'distribute', '|', 'spacing:v', '|', 'fill:v', 'border:v']} />
          </ToolRow>
        </ToolRows>
      </RibbonGroup>
      <RibbonGroup title="样式" w={910} pad={9} launch>
        <Gallery>
          {gallery.map(s => (
            <StyleCard key={s.label}>
              <Preview $font={s.font} $size={s.size} $bold={s.bold}>{s.text}</Preview>
              {s.label}
            </StyleCard>
          ))}
          <More aria-label="其他样式">
            <Svg w={8} h={7}><path d="M0 .5h8M1 3l3 3 3-3" stroke="#444" /></Svg>
          </More>
        </Gallery>
      </RibbonGroup>
      <RibbonGroup title="编辑" w={93} pad={9}>
        <SmallCol>
          <Small icon="find" label="查找" drop wide />
          <Small icon="replace" label="替换" />
          <Small icon="select" label="选择" drop />
        </SmallCol>
      </RibbonGroup>
      <RibbonGroup title="加载项" w={59} center>
        <Big icon="addin" label="加" tail="载项" drop={false} />
      </RibbonGroup>
      <FoldUp />
    </Ribbon>
  )
}

function Status({ pages, words, wordsWidth, access }) {
  return (
    <StatusBar>
      <span>{pages}</span>
      <Count $w={wordsWidth}>{words}</Count>
      <Svg w={14} h={12}><path d="M6.500 1.500v9H1v-9h5.500l2-1M6.500 10.500h6M9 3l4 5M13 3L9 8" stroke="#777" /></Svg>
      <span>简体中文(中国大陆)</span>
      <span>修订: 关闭</span>
      <Access>
        <Svg w={15} h={14}><path d="M4 2a6 6 0 0 0 1 10M7 2v3M5 4h5M10 2a6 6 0 0 1 3 5M7 9l3 3 4-5" stroke="#555" strokeWidth="1.300" /></Svg>
        {access}
      </Access>
      <Views>
        <ViewBtn aria-label="阅读视图"><Svg w={14} h={14}><path d="M1 1.500h5l1 1 1-1h5v10H8l-1 2-1-2H1zM7 2v11M3 4h2M3 6h2M3 8h2M9 4h2M9 6h2M9 8h2" stroke="#777" /></Svg></ViewBtn>
        <ViewBtn $on aria-label="页面视图"><Svg w={14} h={14}><path d="M.5.5h13v13H.5zM3 3.500h8M3 5.500h8M3 7.500h8M3 9.500h8M3 11.500h8" stroke="#666" /></Svg></ViewBtn>
        <ViewBtn aria-label="Web 视图"><Svg w={14} h={14}><path d="M.5.5h9v5M.5.5v12h5M2 3.500h6M2 5.500h5M2 7.500h3" stroke="#777" /><circle cx="10" cy="10" r="3.500" fill="#888" /></Svg></ViewBtn>
      </Views>
      <span>150%</span>
    </StatusBar>
  )
}

function Tasks({ bg }) {
  return (
    <Taskbar $bg={bg}>
      {apps.map(([name, icon, state]) => (
        <AppBtn key={name} $state={state} aria-label={name}>{icon}</AppBtn>
      ))}
      <Clock><span>10:36</span><span>2025-09-05</span></Clock>
    </Taskbar>
  )
}

function RosterPage() {
  const blanks = [0, 1, 2, 3, 4, 5, 6]
  return (
    <Page $pad={180}>
      <Roster>
        <colgroup>
          {[154, 117, 65, 65, 64, 65, 156, 65, 77, 14].map((w, i) => <col key={i} width={w} />)}
        </colgroup>
        <thead>
          <tr>
            <th>职务<CellMark /></th>
            <th>姓&ensp;名<CellMark /></th>
            <th>性别<CellMark /></th>
            <th>年龄<CellMark /></th>
            <th>学历<CellMark /></th>
            <th>职称<CellMark /></th>
            <th>专业特长<CellMark /></th>
            <th><HeadLine>从业</HeadLine><HeadLine>时间<CellMark /></HeadLine></th>
            <th><HeadLine><L>Email</L></HeadLine><HeadLine>地址<CellMark /></HeadLine></th>
            <td><CellMark /></td>
          </tr>
        </thead>
        <tbody>
          {people.map(p => (
            <tr key={p.name}>
              <th scope="row"><Hl $c="#00ffff">{p.job || '操作工'}</Hl><CellMark /></th>
              <td><Hl $c={p.hot && '#ffff00'} $wavy={p.wavy}>{p.name}</Hl><CellMark /></td>
              {blanks.map(b => <td key={b}><CellMark /></td>)}
              <td><CellMark /></td>
            </tr>
          ))}
        </tbody>
      </Roster>
      <ParaMark />
      <RedBox $x={349} $y={103} $w={101} $h={43} />
      <RedBox $x={343} $y={184} $w={96} $h={164} />
      <RedBox $x={343} $y={473} $w={103} $h={160} />
      <RedBox $x={350} $y={679} $w={96} $h={29} />
      <RedBox $x={347} $y={804} $w={103} $h={34} />
      <RedNote>不符合招标文件要求</RedNote>
    </Page>
  )
}

function SpecPage() {
  return (
    <Page $pad={130}>
      <Body>
        <Line $in>气举排水采气工艺作法<L $both>SYT 6124-2017  </L><ParaMark /></Line>
        <Line $in><L $after>1.2</L>主要技术要求<ParaMark /></Line>
        <Line $in><L $after>1.2.1</L>安装必须符合辽河油田<L $both>HSE</L>标准要求<L>,</L>要严格按照甲方地面工艺标准化设计和安全要求进行</Line>
        <Line>管线连接。<ParaMark /></Line>
        <Line $in><L>1.2.2.</L>要求具备连续运行能力，保证连续生产，满足生产需求，<ParaMark /></Line>
        <Line $in><L>1.2.3.</L>严格执行施工设计方案和操作规程施工，施工前要与现场相关人员进行安全、技术交底。<ParaMark /></Line>
        <Line $in><L>1.2.4.</L>最少提供操作人员<L $both>8</L>人，人员要具有压力容器操作证件（<L>R2</L>）证，年龄<L $both>55</L>周岁（包含）以</Line>
        <Line>下，人员提供近一年的<Wavy>社保证明</Wavy>，提供身份证和操作证的扫描件。<ParaMark /></Line>
        <Line $in><L>1.2.5.</L>根据甲方要求控制好设备排量，满足油气井生产需求，做好基础资料录取、记录。<ParaMark /></Line>
        <Line $in><L>1.2.6.</L>编制配套服务方案，方案要有组织机构、人员配置、运行方案等内容，保障生产连续等配</Line>
        <Line>套服务措施，方案要切实可行。制定配套服务相关的应急预案，预案要根据项目可能出现的危险情况，</Line>
        <Line>制定相应的应急预案，处理方法、应急措施等。<ParaMark /></Line>
        <Line $in $bold><L $bold>2.</L>分包要求：<ParaMark /></Line>
        <Line $in $bold><L $bold>3.</L>其他说明事项：无<ParaMark /></Line>
        {[0, 1, 0, 1, 0, 1, 0, 1].map((inset, i) => <Blank key={i} $in={inset}><ParaMark /></Blank>)}
      </Body>
      <RedBox $x={569} $y={282} $w={157} $h={38} />
    </Page>
  )
}

function Navigation() {
  return (
    <NavPane>
      <NavHead>
        <h1>导航</h1>
        <Svg w={13} h={8}><path d="M.5 1l6 5.500 6-5.500" stroke="#444" /></Svg>
        <Svg w={11} h={11}><path d="M.5.5l10 10M10.500.5l-10 10" stroke="#444" /></Svg>
      </NavHead>
      <NavSearch>
        <input aria-label="在文档中搜索" placeholder="在文档中搜索" />
        <Svg w={14} h={14}><circle cx="9" cy="5" r="4" stroke="#2b579a" strokeWidth="2" /><path d="M6 8l-5 5" stroke="#2b579a" strokeWidth="2.300" /></Svg>
        <Chev />
      </NavSearch>
      <NavTabs>
        <NavTab $on>标题</NavTab>
        <NavTab>页面</NavTab>
        <NavTab>结果</NavTab>
      </NavTabs>
      <TreeTop />
      <Tree>
        {outline.map(([level, text, open, on]) => (
          <Node key={text} $level={level} $on={on}>
            <Fork>{open && <Svg w={7} h={7}><path d="M7 0v7H0z" fill="#444" /></Svg>}</Fork>
            <span>{text}</span>
          </Node>
        ))}
      </Tree>
      <DateLine><span>年</span><span>月</span><span>日</span></DateLine>
    </NavPane>
  )
}

export default function App() {
  return (
    <>
      <Global />
      <Desktop>
        <Sliver><i /><i /><i /><i /><i /></Sliver>
        <Screen>
          <Header active="布局" context patch titleWidth={25} />
          <LayoutRibbon />
          <Work>
            <Canvas><RosterPage /></Canvas>
          </Work>
          <Status pages="第 1 页， 共 8 页" words="755 个字" wordsWidth={49} access="辅助功能: 一切就绪" />
          <Tasks bg="linear-gradient(90deg, #22323b, #26373e 50%, #1e2c35 85%, #1d2b34)" />
        </Screen>
        <Screen>
          <Header active="开始" titleWidth={295} />
          <HomeRibbon />
          <Work>
            <Navigation />
            <Canvas><SpecPage /></Canvas>
          </Work>
          <Status pages="第 14 页， 共 36 页" words="11581 个字" wordsWidth={76} access="辅助功能: 不可用" />
          <Tasks bg="linear-gradient(90deg, #22323b, #25353d 45%, #212d33 65%, #332f2c 75%, #1f2d35 86%, #1c2b34)" />
        </Screen>
      </Desktop>
    </>
  )
}
